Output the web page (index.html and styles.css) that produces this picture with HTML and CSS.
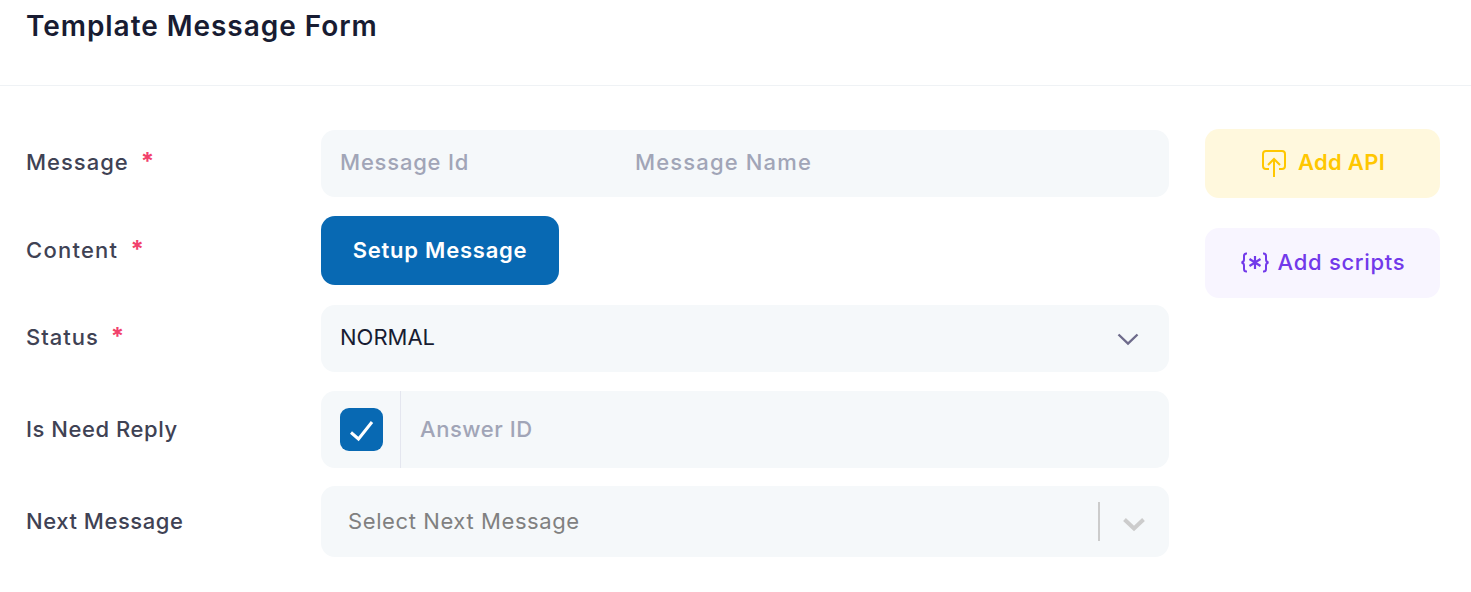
FILE: index.html
```html
<html>
<head>
    <title>Template Message Form</title>
    <link rel="stylesheet" href="styles.css">
</head>
<body>
    <div class="card-header">
        <h2>Template Message Form</h2>
    </div>

    <div class="card-body">
        <form class="form-rows">
            <!-- Message -->
            <div class="form-row">
                <label>Message <span class="required">*</span></label>
                <div class="field field-split">
                    <span class="placeholder message-id">Message Id</span>
                    <span class="placeholder message-name">Message Name</span>
                </div>
            </div>

            <!-- Content -->
            <div class="form-row">
                <label class="label-wide">Content <span class="required">*</span></label>
                <div class="button-cell"><button type="button" class="setup-button">Setup Message</button></div>
            </div>

            <!-- Status -->
            <div class="form-row">
                <label>Status <span class="required">*</span></label>
                <div class="field field-select">
                    <span class="value">NORMAL</span>
                    <svg class="chevron" width="24" height="24" viewBox="0 0 24 24" fill="none" stroke="#6e6b8b" stroke-width="2.4"><path d="M2.500 7.500L12 16.500l9.500-9"/></svg>
                </div>
            </div>

            <!-- Is Need Reply -->
            <div class="form-row row-low">
                <label>Is Need Reply</label>
                <div class="field field-check">
                    <div class="check-cell">
                        <div class="check-box">
                            <svg width="28" height="28" viewBox="0 0 28 28" fill="none" stroke="#fff" stroke-width="3"><path d="M3 16.500l7.500 6.500L24 6"/></svg>
                        </div>
                    </div>
                    <span class="placeholder answer-id">Answer ID</span>
                </div>
            </div>

            <!-- Next Message -->
            <div class="form-row row-low row-next">
                <label>Next Message</label>
                <div class="field field-next">
                    <span class="select-text">Select Next Message</span>
                    <span class="select-divider"></span>
                    <svg class="select-arrow" width="24" height="24" viewBox="0 0 24 24" fill="none" stroke="#ccc" stroke-width="4"><path d="M2.500 9.500L12 18.500l9.500-9"/></svg>
                </div>
            </div>
        </form>

        <div class="side-buttons">
            <div class="side-button side-api">
                <svg class="api-icon" width="24" height="28" viewBox="0 0 24 28" fill="none" stroke="#ffc700" stroke-width="2"><path d="M7 19H4a3 3 0 0 1-3-3V4a3 3 0 0 1 3-3h16a3 3 0 0 1 3 3v12a3 3 0 0 1-3 3h-3"/><path d="M12 27V9M6 15l6-6 6 6"/></svg>
                <span>Add API</span>
            </div>
            <div class="side-button side-scripts">
                <svg width="30" height="24" viewBox="0 0 30 24" fill="none" stroke="#7239ea" stroke-width="2"><path d="M7 2.500H6.500C4.800 2.500 4 3.500 4 5v3.500C4 10.300 3 11.200 1.500 11.500 3 11.800 4 12.700 4 14.500V18c0 1.500.8 2.500 2.500 2.500H7"/><path d="M23 2.500h.5c1.700 0 2.500 1 2.500 2.500v3.500c0 1.800 1 2.700 2.500 3-1.500.3-2.500 1.200-2.500 3V18c0 1.500-.8 2.500-2.500 2.500H23"/><path stroke-width="2.200" d="M15 5v13M9.500 8l11 7M20.500 8l-11 7"/></svg>
                <span>Add scripts</span>
            </div>
        </div>
    </div>
</body>
</html>
```

FILE: styles.css
```css
body, h2, form, label {
    margin: 0;
    padding: 0;
    box-sizing: border-box;
}

body {
    font-family: 'Inter', 'Open Sans', sans-serif;
    background-color: #fff;
    color: #3f4254;
}

.card-header {
    height: 86px;
    padding: 10px 26px 0;
    border-bottom: 1px solid #eff2f5;
    box-sizing: border-box;
}

.card-header h2 {
    font-size: 28px;
    line-height: 32px;
    font-weight: 600;
    letter-spacing: 0.95px;
    color: #181c32;
}

.card-body {
    display: flex;
    gap: 36px;
    padding: 44px 31px 0 26px;
}

.form-rows {
    display: flex;
    flex-direction: column;
    gap: 19px;
    width: 1143px;
}

.form-row {
    display: grid;
    grid-template-columns: 295px 848px;
    align-items: center;
}

.row-next {
    margin-top: -1px;
}

.form-row label {
    padding-bottom: 3px;
    font-size: 22px;
    font-weight: 500;
    letter-spacing: 1px;
}

.form-row .label-wide {
    letter-spacing: 1.25px;
}

.required {
    color: #f1416c;
    font-size: 24px;
    line-height: 20px;
    font-weight: 700;
    margin-left: 5px;
}

.field {
    display: flex;
    align-items: center;
    background-color: #f5f8fa;
    border-radius: 14px;
    font-size: 22px;
    font-weight: 500;
}

.field span {
    padding-bottom: 3px;
}

/* last two rows sit a pixel lower than the others */
.row-low label,
.row-low .field span {
    padding-bottom: 1px;
    letter-spacing: 0.55px;
}

.placeholder {
    color: #a1a5b7;
}

.field-split {
    height: 67px;
    padding-left: 19px;
}

.message-id {
    width: 295px;
    letter-spacing: 0.8px;
}

.message-name {
    letter-spacing: 1.15px;
}

.button-cell {
    height: 70px;
}

.setup-button {
    display: block;
    width: 238px;
    height: 69px;
    padding-bottom: 2px;
    border: none;
    border-radius: 14px;
    background-color: #0869b3;
    color: #fff;
    font-family: inherit;
    font-size: 22px;
    font-weight: 600;
    letter-spacing: 0.77px;
}

.field-select {
    height: 67px;
    padding: 0 29px 0 19px;
    justify-content: space-between;
}

.field-select .value {
    color: #181c32;
    font-weight: 400;
}

.field-check {
    height: 77px;
}

.check-cell {
    display: flex;
    align-items: center;
    height: 100%;
    padding: 0 17px 0 19px;
    border-right: 1px solid #e4e6ef;
}

.check-box {
    display: flex;
    align-items: center;
    justify-content: center;
    width: 43px;
    height: 43px;
    border-radius: 9px;
    background-color: #0869b3;
}

.answer-id {
    margin-left: 19px;
}

.field-next {
    height: 71px;
    padding: 0 23px 0 27px;
}

.select-text {
    flex: 1;
    color: #808080;
    font-weight: 400;
}

.row-low .field .select-text {
    letter-spacing: 0.6px;
}

.row-low .field .select-divider {
    width: 2px;
    height: 39px;
    padding: 0;
    background-color: #ccc;
    margin-right: 22px;
}

.side-buttons {
    display: flex;
    flex-direction: column;
    gap: 30px;
    width: 235px;
    margin-top: -1px;
}

.side-button {
    display: flex;
    align-items: center;
    justify-content: center;
    gap: 12px;
    height: 69px;
    border-radius: 14px;
    font-size: 22px;
    font-weight: 500;
}

.side-button span {
    padding-bottom: 3px;
}

.side-api {
    background-color: #fff8dd;
    color: #ffc700;
    font-weight: 600;
    letter-spacing: 0.3px;
}

.api-icon {
    margin-left: 2px;
}

.side-scripts {
    height: 70px;
    background-color: #f8f5ff;
    color: #7239ea;
    gap: 8px;
    letter-spacing: 0.7px;
}
```
